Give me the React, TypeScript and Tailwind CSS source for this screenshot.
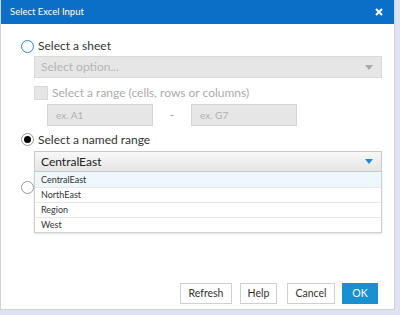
import React from 'react';

const font = { fontFamily: 'Lato, "Open Sans", sans-serif' };

function Radio({ checked, blue }: { checked?: boolean; blue?: boolean }) {
  return (
    <div
      className={
        'w-[13px] h-[13px] rounded-full flex items-center justify-center bg-white shrink-0 ' +
        (blue ? 'border-[1.5px] border-[#2b88bd]' : 'border border-[#9a9a9a]')
      }
    >
      {checked && <div className="w-[7px] h-[7px] rounded-full bg-black" />}
    </div>
  );
}

function Caret({ color }: { color: string }) {
  return (
    <svg width="8" height="5" viewBox="0 0 8 5" className="shrink-0">
      <path d="M0 0h8L4 5z" fill={color} />
    </svg>
  );
}

export default function App() {
  const items = ['CentralEast', 'NorthEast', 'Region', 'West'];
  return (
    <div className="w-[400px] h-[315px] bg-[#dde3f2]" style={font}>
      <div className="w-[395px] h-[310px] bg-white border-l border-r border-b border-[#d2d2d2] flex flex-col">
        <div className="h-[24px] bg-[#0b6fc7] flex items-center justify-between pl-[9px] pr-[11px] shrink-0">
          <span className="text-white text-[9.5px]">Select Excel Input</span>
          <svg width="8" height="8" viewBox="0 0 8 8">
            <path d="M1 1l6 6M7 1L1 7" stroke="white" strokeWidth="2" />
          </svg>
        </div>

        <div className="flex-1 flex flex-col pl-[20px] pr-[12px] pt-[15px]">
          <div className="flex items-center h-[14px] gap-[4px]">
            <Radio blue />
            <span className="text-[12px] text-[#333] leading-none">Select a sheet</span>
          </div>

          <div className="ml-[13px] mt-[3px] h-[22px] bg-[#e6e6e6] border border-[#d9d9d9] flex items-center justify-between pl-[6px] pr-[8px]">
            <span className="text-[12px] text-[#b5b5b5]">Select option...</span>
            <Caret color="#a8a8a8" />
          </div>

          <div className="ml-[13px] mt-[8px] h-[14px] flex items-center gap-[4px]">
            <div className="w-[14px] h-[14px] bg-[#e6e6e6] border border-[#d9d9d9] shrink-0" />
            <span className="text-[12px] text-[#ababab] leading-none">Select a range (cells, rows or columns)</span>
          </div>

          <div className="ml-[26px] mt-[4px] h-[22px] flex items-center">
            <div className="w-[106px] h-[22px] bg-[#e6e6e6] border border-[#d4d4d4] flex items-center pl-[8px]">
              <span className="text-[10px] text-[#b0b0b0]">ex. A1</span>
            </div>
            <div className="w-[38px] text-center text-[12px] text-[#a0a0a0]">-</div>
            <div className="w-[106px] h-[22px] bg-[#e6e6e6] border border-[#d4d4d4] flex items-center pl-[8px]">
              <span className="text-[10px] text-[#b0b0b0]">ex. G7</span>
            </div>
          </div>

          <div className="flex items-center h-[13px] mt-[7px] gap-[4px]">
            <Radio checked />
            <span className="text-[12px] text-[#333] leading-none">Select a named range</span>
          </div>

          <div className="relative ml-[13px] mt-[5px]">
            <div className="h-[21px] bg-gradient-to-b from-[#f8f8f8] to-[#e5e5e5] border border-[#cacaca] flex items-center justify-between pl-[6px] pr-[8px]">
              <span className="text-[12px] text-[#222]">CentralEast</span>
              <Caret color="#1e8ad6" />
            </div>
            <div className="absolute left-0 right-0 top-full bg-white border border-t-0 border-[#cfcfcf] shadow-[0_1px_2px_rgba(0,0,0,0.12)] z-10">
              {items.map((it, i) => (
                <div
                  key={it}
                  className={
                    'h-[15px] flex items-center pl-[6px] text-[9px] text-[#333] ' +
                    (i === 0 ? 'bg-[#eef7fb] ' : 'border-t border-[#e8e8e8] ')
                  }
                >
                  {it}
                </div>
              ))}
            </div>
          </div>

          <div className="flex items-center h-[13px] mt-[9px]">
            <Radio />
          </div>
        </div>

        <div className="flex justify-end items-center pr-[16px] pb-[5px] gap-[8px]">
          <button className="h-[21px] w-[52px] border border-[#d0d0d0] bg-white text-[10.5px] text-[#333]">Refresh</button>
          <button className="h-[21px] w-[37px] border border-[#d0d0d0] bg-white text-[10.5px] text-[#333]">Help</button>
          <button className="h-[21px] w-[48px] ml-[2px] border border-[#d0d0d0] bg-white text-[10.5px] text-[#333]">Cancel</button>
          <button className="h-[21px] w-[36px] ml-[-1px] bg-[#1a8fd2] text-[10.5px] text-white">OK</button>
        </div>
      </div>
    </div>
  );
}
